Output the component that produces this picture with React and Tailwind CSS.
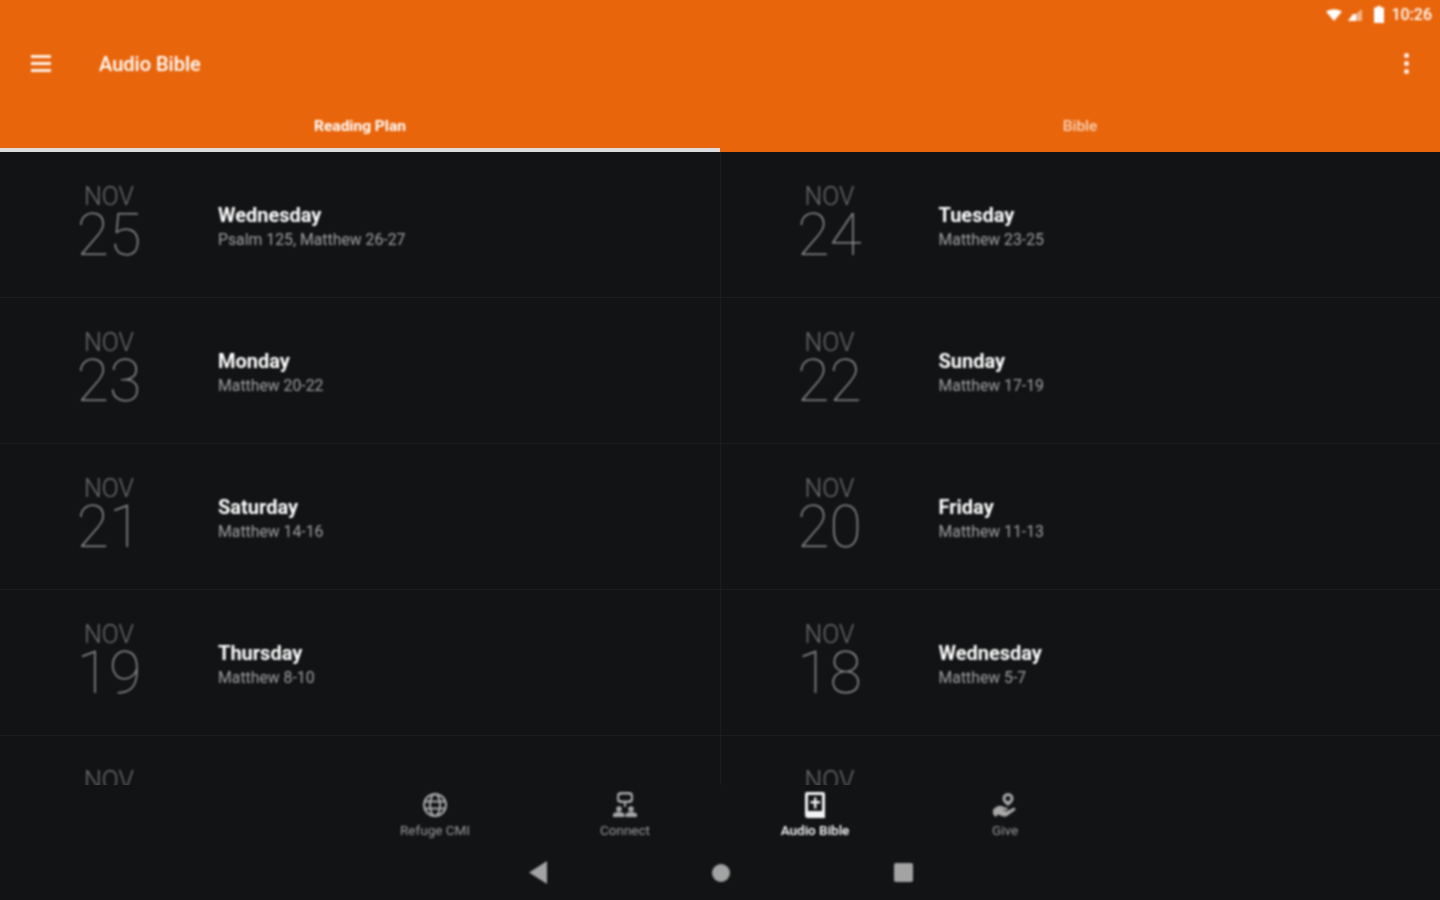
import React from 'react'

const rows = [
  [{ month: 'NOV', day: '25', name: 'Wednesday', text: 'Psalm 125, Matthew 26-27' }, { month: 'NOV', day: '24', name: 'Tuesday', text: 'Matthew 23-25' }],
  [{ month: 'NOV', day: '23', name: 'Monday', text: 'Matthew 20-22' }, { month: 'NOV', day: '22', name: 'Sunday', text: 'Matthew 17-19' }],
  [{ month: 'NOV', day: '21', name: 'Saturday', text: 'Matthew 14-16' }, { month: 'NOV', day: '20', name: 'Friday', text: 'Matthew 11-13' }],
  [{ month: 'NOV', day: '19', name: 'Thursday', text: 'Matthew 8-10' }, { month: 'NOV', day: '18', name: 'Wednesday', text: 'Matthew 5-7' }],
  [{ month: 'NOV', day: '17', name: 'Tuesday', text: 'Matthew 2-4' }, { month: 'NOV', day: '16', name: 'Monday', text: 'Matthew 1' }],
]

function GlobeIcon() {
  return (
    <svg width="26" height="26" viewBox="0 0 26 26" fill="none" stroke="#a8a8a8" strokeWidth="2">
      <circle cx="13" cy="13" r="11" />
      <ellipse cx="13" cy="13" rx="5" ry="11" />
      <path d="M3 9.500h20M3 16.500h20" />
    </svg>
  )
}

function ConnectIcon() {
  return (
    <svg width="24" height="26" viewBox="0 0 24 26" fill="#a8a8a8">
      <path fillRule="evenodd" d="M8 0h8a4 4 0 0 1 4 4v3a4 4 0 0 1-4 4H8a4 4 0 0 1-4-4V4a4 4 0 0 1 4-4zm1 2.500a2.500 2.500 0 0 0 0 6h6a2.500 2.500 0 0 0 0-6z" />
      <rect x="11" y="11" width="2" height="4" />
      <circle cx="6" cy="17" r="2.800" />
      <circle cx="18" cy="17" r="2.800" />
      <path d="M0 25v-2.500C0 21 3 20 6 20s5.500 1 5.500 2.500V25zM12.500 25v-2.500C12.500 21 15 20 18 20s6 1 6 2.500V25z" />
    </svg>
  )
}

function BibleIcon() {
  return (
    <svg width="24" height="26" viewBox="0 0 24 26">
      <path fill="#f2f2f2" d="M4 0h16a2 2 0 0 1 2 2v24H5a3 3 0 0 1-3-3V2a2 2 0 0 1 2-2z" />
      <rect x="5" y="3" width="14" height="16" fill="#141517" />
      <path fill="#f2f2f2" d="M11 5.500h2.400V9H17v2.400h-3.600v5.100H11v-5.100H7.500V9H11z" />
    </svg>
  )
}

function GiveIcon() {
  return (
    <svg width="26" height="26" viewBox="0 0 26 26" fill="#a8a8a8">
      <path fillRule="evenodd" d="M16 1a5.500 5.500 0 0 1 5.500 5.500c0 3-3 5.500-5.500 7.500-2.500-2-5.500-4.500-5.500-7.500A5.500 5.500 0 0 1 16 1zm0 3a2.500 2.500 0 1 0 0 5 2.500 2.500 0 0 0 0-5z" />
      <path d="M1 17.500 5 14.500c2-1 4-1 6 0l4 1.500c1.500.6 1 2.500-.5 2.300L10 17.500l4.500 2 6.500-3.500c1.500-.8 3.500 1 2 2.300L15 24c-1.500.8-3 .8-4.500.2L6 22.500 3.500 25 1 22z" />
    </svg>
  )
}

function StatusBar() {
  return (
    <div className="h-[30px] flex items-center justify-end pr-2 pb-[1px] gap-[5px] text-white blur-[0.8px]">
      <svg width="16" height="12" viewBox="0 0 16 12" fill="white"><path d="M0 2.500Q8-2 16 2.500L8 12z" /></svg>
      <svg width="16" height="14" viewBox="0 0 16 14"><path d="M15 1v12H1z" fill="white" fillOpacity="0.5" /><path d="M9 6V13H1l5-7z" fill="white" /></svg>
      <svg width="12" height="17" viewBox="0 0 12 17" fill="white" className="ml-[5px]"><path d="M4 0h4v1.500h3V17H1V1.500h3z" /></svg>
      <span className="ml-[1px] text-[16px] leading-none font-medium">10:26</span>
    </div>
  )
}

function Entry({ month, day, name, text }) {
  return (
    <div className="flex-1 flex items-start blur-[0.8px]">
      <div className="w-[218px] shrink-0 pt-[31px] text-center font-light text-[#6c6e70]">
        <div className="text-[25px] leading-[28px]">{month}</div>
        <div className="text-[59px] leading-[48px] font-thin text-[#8a8c8e]">{day}</div>
      </div>
      <div className="pt-[50px]">
        <div className="text-[20px] leading-[26px] font-bold text-white">{name}</div>
        <div className="mt-[1px] text-[15.800px] leading-[21px] text-[#a0a1a3]">{text}</div>
      </div>
    </div>
  )
}

function NavItem({ icon, label, active }) {
  return (
    <div className="w-[190px] flex flex-col items-center blur-[0.8px]">
      <div className="h-[26px] flex items-center justify-center">{icon}</div>
      <div className={`text-[13.500px] leading-[18px] mt-[3px] ${active ? 'font-medium text-white' : 'text-[#9a9a9a]'}`}>{label}</div>
    </div>
  )
}

export default function App() {
  return (
    <div className="h-screen flex flex-col overflow-hidden bg-[#121315] font-['Roboto',sans-serif]">
      <header className="bg-[#e8650c] text-white shrink-0">
        <StatusBar />
        <div className="h-[67px] flex items-center pl-[31px] pr-[30px] pb-[1px] blur-[0.8px]">
          <div className="w-[20px] flex flex-col gap-[4px]">
            <div className="h-[3px] bg-white/90" />
            <div className="h-[3px] bg-white/90" />
            <div className="h-[3px] bg-white/90" />
          </div>
          <div className="ml-[48px] mt-[2px] text-[20px] font-medium text-white">Audio Bible</div>
          <div className="ml-auto flex flex-col gap-[3px] pr-[1px]">
            <div className="w-[5px] h-[5px] rounded-full bg-white/90" />
            <div className="w-[5px] h-[5px] rounded-full bg-white/90" />
            <div className="w-[5px] h-[5px] rounded-full bg-white/90" />
          </div>
        </div>
        <div className="h-[55px] flex text-[15.500px] font-bold">
          <div className="flex-1 flex items-center justify-center pt-[8px] border-b-[4px] border-[#dcdcdc] text-white">
            <span className="blur-[0.8px]">Reading Plan</span>
          </div>
          <div className="flex-1 flex items-center justify-center pt-[8px] pb-[4px] font-medium text-white/70">
            <span className="blur-[0.8px]">Bible</span>
          </div>
        </div>
      </header>

      <main className="flex-1 min-h-0 overflow-hidden">
        {rows.map((pair, i) => (
          <div key={i} className="h-[146px] flex border-b border-[#1c1d1f]">
            <div className="flex-1 flex border-r border-[#1c1d1f]"><Entry {...pair[0]} /></div>
            <div className="flex-1 flex"><Entry {...pair[1]} /></div>
          </div>
        ))}
      </main>

      <footer className="h-[115px] shrink-0 bg-[#121315] pt-[7px]">
        <div className="flex justify-center">
          <NavItem label="Refuge CMI" icon={<GlobeIcon />} />
          <NavItem label="Connect" icon={<ConnectIcon />} />
          <NavItem label="Audio Bible" active icon={<BibleIcon />} />
          <NavItem label="Give" icon={<GiveIcon />} />
        </div>
        <div className="mt-[22px] flex items-center justify-center gap-[164px] blur-[0.8px]">
          <svg width="20" height="23" viewBox="0 0 20 23" fill="#a3a3a3"><path d="M19 0v23L1 11.500z" /></svg>
          <div className="w-[18px] h-[18px] rounded-full bg-[#a3a3a3]" />
          <div className="w-[19px] h-[19px] rounded-[2px] bg-[#a3a3a3]" />
        </div>
      </footer>
    </div>
  )
}
